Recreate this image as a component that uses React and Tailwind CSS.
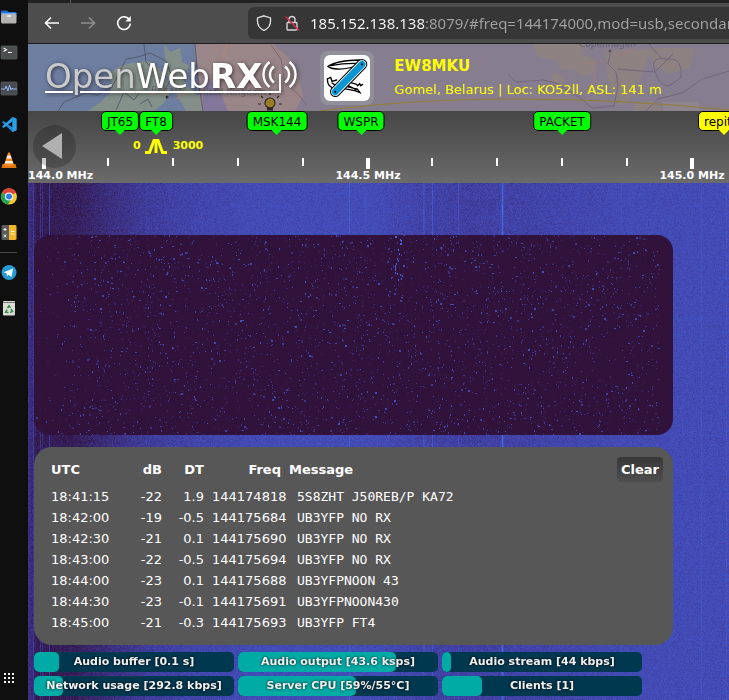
import { useEffect, useRef } from "react";

function makeRandom(seed) {
  let s = seed;
  return () => {
    s = (s + 0x6d2b79f5) | 0;
    let t = Math.imul(s ^ (s >>> 15), 1 | s);
    t = (t + Math.imul(t ^ (t >>> 7), 61 | t)) ^ t;
    return ((t ^ (t >>> 14)) >>> 0) / 4294967296;
  };
}

// Low end of the turbo colour map.
const COLOR_STOPS = [
  [48, 18, 59],
  [58, 44, 121],
  [66, 70, 174],
  [69, 91, 205],
  [72, 125, 242],
];

function turbo(value) {
  const v = Math.max(0, Math.min(0.999, value)) * (COLOR_STOPS.length - 1);
  const i = Math.floor(v);
  const f = v - i;
  return COLOR_STOPS[i].map((c, k) => c + (COLOR_STOPS[i + 1][k] - c) * f);
}

const LEVELS = [
  [0, 0.3], [6, 0.2], [8, 0.1], [45, 0.12], [75, 0.25], [110, 0.38], [150, 0.47],
  [230, 0.56], [340, 0.57], [390, 0.48], [440, 0.44], [510, 0.48], [600, 0.55], [701, 0.56], [4000, 0.56],
];

const CARRIERS = {
  5: 0.15, 12: 0.22, 14: 0.18, 21: 0.3, 118: 0.06, 321: 0.15, 337: 0.06, 395: 0.14, 396: 0.1,
  404: 0.22, 430: 0.14, 473: 0.12, 474: 0.36, 475: 0.12, 593: 0.07, 673: 0.09, 698: 0.08,
};

function level(x) {
  for (let i = 1; i < LEVELS.length; i++) {
    if (x <= LEVELS[i][0]) {
      const [x0, y0] = LEVELS[i - 1];
      const [x1, y1] = LEVELS[i];
      return y0 + ((y1 - y0) * (x - x0)) / (x1 - x0);
    }
  }
  return 0.56;
}

function paintSpectrum(ctx, w, h) {
  const rand = makeRandom(144);
  const img = ctx.createImageData(w, h);
  for (let y = 0; y < h; y++) {
    const row = (rand() - 0.5) * 0.03;
    for (let x = 0; x < w; x++) {
      const noise = (rand() + rand() - 1) * 0.13;
      const c = turbo(level(x) + row + noise + (CARRIERS[x] || 0));
      const p = (y * w + x) * 4;
      img.data[p] = c[0];
      img.data[p + 1] = c[1];
      img.data[p + 2] = c[2];
      img.data[p + 3] = 255;
    }
  }
  ctx.putImageData(img, 0, 0);
}

const TRAIL = [
  [365, 1], [366, 1], [370, 4], [371, 5], [370, 8], [371, 8], [368, 14], [369, 18], [367, 23], [368, 25],
  [366, 28], [365, 30], [365, 32], [365, 34], [365, 37], [367, 38], [370, 39], [372, 40], [371, 43], [368, 44],
];

function paintDecoder(ctx, w, h) {
  const rand = makeRandom(8079);
  ctx.fillStyle = "#30123b";
  ctx.fillRect(0, 0, w, h);
  const count = Math.round(w * h * 0.042);
  for (let i = 0; i < count; i++) {
    const x = Math.floor(rand() * (w - 14));
    const y = Math.floor(rand() * h);
    const v = rand() ** 2.2 * 0.6 + 0.04;
    const tall = rand() > 0.72 ? 2 : 1;
    if (x < 35 && rand() < 0.6) continue;
    const c = turbo(v);
    ctx.fillStyle = `rgb(${c[0]},${c[1]},${c[2]})`;
    ctx.fillRect(x, y, rand() > 0.85 ? 2 : 1, tall);
  }
  ctx.fillStyle = "#4566dc";
  TRAIL.forEach(([x, y]) => ctx.fillRect(x - 4, y, 1, 2));
}

function Waterfall({ paint, label, className }) {
  const ref = useRef(null);
  useEffect(() => {
    const draw = () => {
      const el = ref.current;
      if (!el) return;
      el.width = el.clientWidth;
      el.height = el.clientHeight;
      paint(el.getContext("2d"), el.width, el.height);
    };
    draw();
    window.addEventListener("resize", draw);
    return () => window.removeEventListener("resize", draw);
  }, [paint]);
  return <canvas ref={ref} aria-label={label} className={className} />;
}

const DOCK_TOP = [
  ["Files", (
    <>
      <path d="M1 3.5q0-1 1-1h5l1.5 1.5H15q1.500 0 1.500 1.500V9H1z" fill="#1c6fd0" />
      <path d="M1 5.500h15.500" stroke="#74b4f4" strokeWidth="1" />
      <rect x="1" y="6" width="15.500" height="9.500" rx="1.500" fill="#b4b2b0" />
      <path d="M7 8h4" stroke="#fff" strokeWidth="1.300" />
    </>
  )],
  ["Terminal", (
    <>
      <rect x="1" y="2" width="16" height="13" rx="1" fill="#4b4d4e" stroke="#606263" strokeWidth=".7" />
      <path d="M3.500 4l3 1.700-3 1.700M8 8.500h4" stroke="#fff" strokeWidth="1.100" fill="none" />
    </>
  )],
  ["System Monitor", (
    <>
      <rect x="1" y="2" width="16" height="13" rx="1" fill="#484b4f" stroke="#606263" strokeWidth=".7" />
      <path d="M1 9h4l1-3 2 5 1.500-6 1.500 5 1-2 1 1h4" stroke="#8fb4f2" strokeWidth="1" fill="none" />
    </>
  )],
  ["Visual Studio Code", (
    <>
      <path d="M12.500 1l4 1.800v11.500l-4 1.700L2 6.300 3.500 5l9 6.500z" fill="#1e8ad2" />
      <path d="M12.500 1L2 10.700 3.500 12l9-6.800z" fill="#2aa4ee" />
      <path d="M12.500 1l4 1.800v11.500l-4 1.700z" fill="#2ba0e8" />
    </>
  )],
  ["VLC", (
    <>
      <path d="M2.500 12h13l1 4h-15z" fill="#e2760c" />
      <path d="M8.200.5h1.600L14 13q-5 2-10 0z" fill="#f58a1d" />
      <path d="M7.300 3.500h3.400l1 3H6.300zM5.500 9h7l.8 2.500H4.700z" fill="#eeeeea" />
    </>
  )],
  ["Chrome", (
    <>
      <circle cx="9" cy="8.500" r="8" fill="#f6c92e" />
      <path d="M9 8.500L2 4.500A8 8 0 0 1 16 4.500z" fill="#df4335" />
      <path d="M2 4.500a8 8 0 0 0 6 12l3.500-6z" fill="#23a455" />
      <path d="M9 4.500h7" stroke="#df4335" strokeWidth="1" />
      <circle cx="9" cy="8.500" r="4" fill="#fff" />
      <circle cx="9" cy="8.500" r="3" fill="#2f7be8" />
    </>
  )],
  ["Calculator", (
    <>
      <path d="M3 1h6v15H3q-1.500 0-1.500-1.500v-12Q1.500 1 3 1z" fill="#5d5d5f" />
      <path d="M9 1h6q1.500 0 1.500 1.500v12Q16.500 16 15 16H9z" fill="#f5b52c" />
      <path d="M3.500 5.500h3M5 4v3M3.700 10.500l2.600 2.600M6.300 10.500l-2.600 2.600M11 7.500h3.500M11 10h3.500" stroke="#fff" strokeWidth="1" />
    </>
  )],
];

const DOCK_BOTTOM = [
  ["Telegram", (
    <>
      <circle cx="9" cy="8.500" r="7.500" fill="#269bd3" />
      <path d="M3.800 8.300L13 4.500l-1.500 8.500-3-2.200-1.500 1.500-.3-2.800z" fill="#fff" />
    </>
  )],
  ["Trash", (
    <>
      <rect x="3" y="1" width="12" height="14.500" rx="1" fill="#dcdcd8" />
      <path d="M3 2.500h12" stroke="#777" strokeWidth="1" />
      <path d="M7.500 8L9 5.800l1.500 2M11 9l1.500 2.500-2.500.8M8.500 12.500l-2.800-.3L7 9.700" stroke="#2f8a3e" strokeWidth="1.500" fill="none" />
    </>
  )],
];

function DockButton({ name, children }) {
  return (
    <button type="button" aria-label={name} className="block h-4 w-[18px]">
      <svg viewBox="0 0 18 17" className="h-[17px] w-[18px]">{children}</svg>
    </button>
  );
}

function Dock() {
  return (
    <nav aria-label="Applications" className="flex w-7 shrink-0 flex-col bg-[#0f0f0f] pt-2 pb-4">
      <div className="flex flex-col gap-5">
        {DOCK_TOP.map(([name, art]) => <DockButton key={name} name={name}>{art}</DockButton>)}
      </div>
      <hr className="mt-3 mb-[11px] w-[17px] border-t border-[#4a4a4a]" />
      <div className="flex flex-col gap-5">
        {DOCK_BOTTOM.map(([name, art]) => <DockButton key={name} name={name}>{art}</DockButton>)}
      </div>
      <button type="button" aria-label="Show applications" className="mt-auto h-3 w-[18px]">
        <svg viewBox="0 0 18 12" className="h-3 w-[18px]" fill="#f2f2f2">
          {[4, 8, 12].map((x) => [1, 5, 9].map((y) => <rect key={`${x}-${y}`} x={x} y={y} width="2" height="2" />))}
        </svg>
      </button>
    </nav>
  );
}

function BrowserBar() {
  return (
    <div className="border-b border-[#1c1b1b] bg-[#4d4d4d]">
      <div className="flex h-[3px] bg-[#222222]">
        <div className="ml-[42px] w-px bg-[#5a5a5a]" />
      </div>
      <div className="flex h-10 items-center">
        <div className="flex w-[220px] shrink-0 items-center gap-5 pl-4">
          <button type="button" aria-label="Back">
            <svg viewBox="0 0 16 16" className="size-4" fill="none" stroke="#fbfbfe" strokeWidth="1.600">
              <path d="M15 8H1.500M7 2.500L1.500 8 7 13.500" />
            </svg>
          </button>
          <button type="button" aria-label="Forward">
            <svg viewBox="0 0 16 16" className="size-4" fill="none" stroke="#8d8d8e" strokeWidth="1.600">
              <path d="M1 8h13.500M9 2.500L14.500 8 9 13.500" />
            </svg>
          </button>
          <button type="button" aria-label="Reload">
            <svg viewBox="0 0 16 16" className="size-4" fill="none" stroke="#fbfbfe" strokeWidth="1.600">
              <path d="M13.500 5A6.300 6.300 0 1 0 14.300 8.500" />
              <path d="M14.800 1v5.500H9.300z" fill="#fbfbfe" stroke="none" />
            </svg>
          </button>
        </div>
        <div className="flex h-8 min-w-0 flex-1 items-center rounded-l-md bg-[#363636] pl-2">
          <svg viewBox="0 0 16 16" className="size-4 shrink-0" fill="none" stroke="#e4e4e6" strokeWidth="1.300">
            <path d="M8 .8L14.500 3q.5 5-1.500 8.500-1.700 2.500-5 4-3.300-1.500-5-4Q1 8 1.500 3z" />
          </svg>
          <svg viewBox="0 0 16 16" className="ml-3 size-4 shrink-0" fill="none" stroke="#d4d4d6" strokeWidth="1.400">
            <rect x="3" y="7.500" width="10" height="7.500" rx="1" />
            <path d="M5 7V4.500a3 3 0 0 1 6 0V7" />
            <path d="M1.500 1.500l13.500 14" stroke="#e22850" />
          </svg>
          <input
            type="text"
            aria-label="Address"
            readOnly
            value="185.152.138.138:8079/#freq=144174000,mod=usb,secondary"
            className="ml-[10px] h-6 min-w-0 flex-1 bg-[linear-gradient(90deg,#fbfbfe_115px,#a2a2a4_115px)] bg-clip-text font-['Noto_Sans',sans-serif] text-[15px] text-transparent outline-none"
          />
        </div>
      </div>
    </div>
  );
}

function MapBackdrop() {
  return (
    <svg viewBox="0 0 701 67" preserveAspectRatio="xMinYMin slice" className="absolute inset-0 h-full w-full" aria-hidden="true">
      <rect width="701" height="67" fill="#6e7ea1" />
      <path d="M60 67l14-10 8-8 2-10-4-8 10-8 14-4 16-2 10 6 8 12 4 12-6 12-10 8z" fill="#84908a" />
      <path d="M136 0l6 8 10-4 2 14 8 4-8 10 4 10 12 8 14 6 2 11h-28l-8-14-8-12-4-12z" fill="#848f89" />
      <path d="M167 0h534v67H174z" fill="#867d8f" />
      <path d="M167 0h78l16 14 10 20 4 18-8 15h-93z" fill="#9a8688" />
      <path d="M176 30l16 18 8 19h-26z" fill="#83789b" />
      <path d="M505 0h52l-5 18-8 9-12-2-4-9-18-2zM525 28l12 4-2 10-12-2zM548 14q12-6 20 4l-2 12-14 2-6-8zM577 6h46l-8 22-14 28-10 6-8-14-3-16zM619 4h48l-6 20-20 6-14-8zM606 60l18-4 12 11h-32z" fill="#8d8182" />
      <path d="M635 58h36v9h-36z" fill="#8f8591" />
      <path d="M30 67l6-9 22-9 12 2 14-8 8-16 6-12 12-2 12-4 16 8 6 16-8 14M116 0l2 18 10 10M88 66l8-18 10 8 6-8M112 60l8-5 4 8" fill="none" stroke="#545d6c" strokeWidth="1" />
      <path d="M167 0l3 34 5 33" fill="none" stroke="#625c72" strokeWidth="1" />
      <path d="M195 14l4-14M187 8l5-8M123 50l10-2 6 5M148 55l8-6" fill="none" stroke="#b88672" strokeWidth="1" />
      <path d="M243 1l10 14 4 24 12 10 10 12" fill="none" stroke="#7c6679" strokeWidth="1" />
      <path d="M480 30l8 8 28-2 14 4 22 14 12 10 22-2 4-20-2-14-8-8 2-10M589 25l38 3 18-18M627 28q-6-16 12-13 16-2 14 18l-10 8q-10 4-16-13M618 67l12-12 24-6 20-14 27-8M621 0l12 14" fill="none" stroke="#74667e" strokeWidth="1" />
      <path d="M551 18l14 2 10-4M568 22l-2 14-8 12M590 12l18-8" fill="none" stroke="#a17c79" strokeWidth="1" />
      <path d="M292 67q100-13 200-12 100 0 209 11" fill="none" stroke="#937d34" strokeWidth="1" />
      <g fill="#55505c" opacity="0.65" className="font-['DejaVu_Sans',sans-serif] text-[9px]">
        <text x="123" y="49">Belfast</text>
        <text x="166" y="51">United Kingdom</text>
        <text x="551" y="3">Copenhagen</text>
      </g>
      <circle cx="139" cy="53" r="1.500" fill="#333" />
      <circle cx="582" cy="7" r="1.500" fill="#5d4f5c" />
      <g stroke="#2c2924" strokeWidth="1.200">
        <circle cx="242" cy="59" r="5" fill="#9a7d26" />
        <path d="M239 65h6" strokeWidth="3" />
        <path d="M242 51v-3M235 54l-2-2M249 54l2-2M233 60h-3M251 60h3" />
      </g>
    </svg>
  );
}

function ReceiverHeader() {
  return (
    <header className="relative h-[67px] overflow-hidden">
      <MapBackdrop />
      <div className="relative flex items-start">
        <a
          href="#openwebrx"
          aria-label="OpenWebRX"
          className="mt-3 ml-[17px] flex shrink-0 text-[34px] leading-10 text-white drop-shadow-[1px_1px_2px_rgba(0,0,0,0.6)]"
        >
          <span className="underline decoration-white decoration-2 underline-offset-3">
            <span className="text-[#cbcbcb]">Open</span>Web<b>RX</b>
          </span>
          <svg viewBox="0 0 38 40" className="h-10 w-[38px]" fill="none" stroke="#fff">
            <path d="M0 36h18V18" strokeWidth="2" />
            <path d="M7.500 6a16 16 0 0 0 0 25M12 10.500a10 10 0 0 0 0 16M27.500 6a16 16 0 0 1 0 25M23 10.500a10 10 0 0 1 0 16" strokeWidth="2.400" />
          </svg>
        </a>
        <div className="mt-[7px] ml-5 size-[54px] shrink-0 rounded-lg bg-[#918f99] p-1">
          <svg viewBox="0 0 138 138" className="size-[46px] rounded-md bg-white" fill="none" strokeLinecap="round">
            <path d="M12 34Q40 16 108 15l6 12Q70 44 40 42 20 42 12 34zM20 32q40-8 78-7" stroke="#000" strokeWidth="4" fill="#fff" />
            <path d="M34 100Q10 98 10 72l10-5 4 12 14-4M36 92l-12-8" stroke="#000" strokeWidth="4" />
            <path d="M66 94l34 8 8 11-16-6-32-6M78 82l20 6 3 4 6-6 3 6 6-4M70 90l26 14" stroke="#000" strokeWidth="4" />
            <path d="M34 110L114 28" stroke="#000" strokeWidth="32" />
            <path d="M34 110L114 28" stroke="#fff" strokeWidth="26" />
            <path d="M34 110L114 28" stroke="#0a96d2" strokeWidth="21" />
            <circle cx="114" cy="28" r="3" fill="#000" />
            <circle cx="34" cy="110" r="3" fill="#000" />
          </svg>
        </div>
        <div className="mt-3 ml-5 whitespace-nowrap text-[#ffff00]">
          <h1 className="text-[15px] leading-5 font-bold">EW8MKU</h1>
          <p className="mt-1 text-[13px] leading-5">Gomel, Belarus | Loc: KO52ll, ASL: 141 m</p>
        </div>
      </div>
    </header>
  );
}

const MARKS = [
  { name: "JT65", at: 92, tone: "green" },
  { name: "FT8", at: 128, tone: "green" },
  { name: "MSK144", at: 249, tone: "green" },
  { name: "WSPR", at: 333, tone: "green" },
  { name: "PACKET", at: 534, tone: "green" },
  { name: "repiter", at: 696, tone: "yellow" },
];

const TICKS = Array.from({ length: 11 }, (_, i) => ({ at: Math.round(15.6 + i * 64.8), major: i % 5 === 0 }));

function FrequencyScale() {
  return (
    <section aria-label="Frequency scale" className="relative h-[72px] overflow-hidden bg-linear-to-b from-[#464646] to-[#6b6b6b]">
      {TICKS.map(({ at, major }) => (
        <span
          key={at}
          style={{ left: at }}
          className={major ? "absolute top-[47px] h-[11px] w-1 -translate-x-1/2 bg-white" : "absolute top-[47px] h-2 w-[2px] -translate-x-1/2 bg-white"}
        />
      ))}
      <span className="absolute top-[58px] left-0 text-[11px] leading-[14px] font-bold text-white">144.0 MHz</span>
      <span className="absolute top-[58px] left-[340px] -translate-x-1/2 text-[11px] leading-[14px] font-bold whitespace-nowrap text-white">144.5 MHz</span>
      <span className="absolute top-[58px] left-[664px] -translate-x-1/2 text-[11px] leading-[14px] font-bold whitespace-nowrap text-white">145.0 MHz</span>
      {MARKS.map(({ name, at, tone }) => (
        <button
          key={name}
          type="button"
          style={{ left: at }}
          className={
            tone === "green"
              ? "absolute top-0 h-5 -translate-x-1/2 rounded-[5px] border border-black bg-[#00ff00] px-[5px] text-xs leading-5 whitespace-nowrap text-black"
              : "absolute top-0 h-5 -translate-x-1/2 rounded-[5px] border border-black bg-[#ffff00] px-[5px] text-xs leading-5 whitespace-nowrap text-black"
          }
        >
          {name}
          <span
            className={
              tone === "green"
                ? "absolute top-[18px] left-1/2 -translate-x-1/2 border-x-5 border-t-5 border-x-transparent border-t-[#00ff00]"
                : "absolute top-[18px] left-1/2 -translate-x-1/2 border-x-5 border-t-5 border-x-transparent border-t-[#ffff00]"
            }
          />
        </button>
      ))}
      <div className="absolute top-[27px] left-[105px] flex items-center text-[11px] leading-[14px] font-bold text-[#ffff00]">
        <span>0</span>
        <svg viewBox="0 0 22 16" className="mr-[6px] ml-1 h-4 w-[22px]" fill="none" stroke="#ffff00">
          <path d="M0 14.500h4.500L9 2.500h4L17.500 14.500H22" strokeWidth="3" />
          <path d="M11 1v14" strokeWidth="3" />
        </svg>
        <span>3000</span>
      </div>
      <button type="button" aria-label="Scroll left" className="absolute top-[14px] left-[5px] size-[43px] rounded-full bg-black/20">
        <svg viewBox="0 0 43 43" className="size-[43px]">
          <path d="M9 21L29 8v26z" fill="#b0b0b0" />
        </svg>
      </button>
    </section>
  );
}

const DECODES = [
  ["18:41:15", "-22", "1.9", "144174818", "5S8ZHT J50REB/P KA72"],
  ["18:42:00", "-19", "-0.5", "144175684", "UB3YFP NO RX"],
  ["18:42:30", "-21", "0.1", "144175690", "UB3YFP NO RX"],
  ["18:43:00", "-22", "-0.5", "144175694", "UB3YFP NO RX"],
  ["18:44:00", "-23", "0.1", "144175688", "UB3YFPNOON 43"],
  ["18:44:30", "-23", "-0.1", "144175691", "UB3YFPNOON430"],
  ["18:45:00", "-21", "-0.3", "144175693", "UB3YFP FT4"],
];

function DecodePanel() {
  return (
    <section aria-label="Decoded messages" className="mt-3 flex min-h-[198px] w-full max-w-[639px] items-start rounded-[18px] bg-[#575757] px-[10px] pt-[10px] text-white">
      <table className="w-full min-w-0 flex-1 table-fixed text-[13px] leading-[21px]">
        <colgroup>
          <col className="w-[76px]" />
          <col className="w-[42px]" />
          <col className="w-[42px]" />
          <col className="w-[77px]" />
          <col />
        </colgroup>
        <thead>
          <tr className="h-[29px] align-top">
            <th className="pt-[2px] pl-[7px] text-left">UTC</th>
            <th className="pt-[2px] pl-2 text-right">dB</th>
            <th className="pt-[2px] text-right">DT</th>
            <th className="pt-[2px] text-right">Freq</th>
            <th className="pt-[2px] pl-2 text-left">Message</th>
          </tr>
        </thead>
        <tbody>
          {DECODES.map(([utc, db, dt, freq, message]) => (
            <tr key={utc}>
              <td className="pl-[7px]">{utc}</td>
              <td className="text-right">{db}</td>
              <td className="text-right">{dt}</td>
              <td className="pl-2 text-left whitespace-nowrap">{freq}</td>
              <td className="pl-4 font-['DejaVu_Sans_Mono',monospace] whitespace-nowrap">{message}</td>
            </tr>
          ))}
        </tbody>
      </table>
      <button type="button" className="h-[25px] shrink-0 rounded-[4px] bg-linear-to-b from-[#373737] to-[#4f4f4f] px-1 text-[13px] leading-[25px] font-bold">
        Clear
      </button>
    </section>
  );
}

const METERS = [
  ["Audio buffer [0.1 s]", 12.5],
  ["Audio output [43.6 ksps]", 79],
  ["Audio stream [44 kbps]", 4.5],
  ["Network usage [292.8 kbps]", 14.5],
  ["Server CPU [59%/55°C]", 59],
  ["Clients [1]", 20],
];

function StatusBars() {
  return (
    <section aria-label="Status" className="mt-[7px] mb-1 flex max-w-[640px] flex-wrap gap-1">
      {METERS.map(([text, percent]) => (
        <div key={text} role="progressbar" aria-label={text} aria-valuenow={percent} className="relative h-5 w-[200px] overflow-hidden rounded-[5px] bg-[#003850]">
          <div style={{ width: `${percent}%` }} className="h-full rounded-[5px] bg-[#00aba6]" />
          <span className="absolute inset-0 text-center text-[11px] leading-5 font-bold text-[#f0f0f0] [text-shadow:0_0_3px_#000]">
            {text}
          </span>
        </div>
      ))}
    </section>
  );
}

export default function App() {
  return (
    <div className="flex min-h-screen overflow-hidden bg-[#0f0f0f] font-['DejaVu_Sans',Verdana,sans-serif]">
      <Dock />
      <div className="flex min-w-0 flex-1 flex-col">
        <BrowserBar />
        <ReceiverHeader />
        <FrequencyScale />
        <main className="relative flex-1">
          <Waterfall paint={paintSpectrum} label="Waterfall" className="absolute inset-0 h-full w-full" />
          <div className="relative px-[6px] pt-[52px]">
            <Waterfall paint={paintDecoder} label="Decoder waterfall" className="block h-[200px] w-full max-w-[639px] rounded-2xl" />
            <DecodePanel />
            <StatusBars />
          </div>
        </main>
      </div>
    </div>
  );
}
